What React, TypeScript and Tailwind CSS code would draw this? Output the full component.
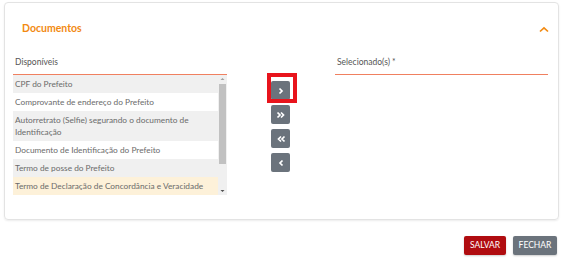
import React from 'react';

const disponiveis = [
  { label: 'CPF do Prefeito', bg: 'bg-[#f0f0f0]' },
  { label: 'Comprovante de endereço do Prefeito', bg: 'bg-white' },
  { label: 'Autorretrato (Selfie) segurando o documento de Identificação', bg: 'bg-[#f0f0f0]' },
  { label: 'Documento de Identificação do Prefeito', bg: 'bg-white' },
  { label: 'Termo de posse do Prefeito', bg: 'bg-[#f0f0f0]' },
  { label: 'Termo de Declaração de Concordância e Veracidade', bg: 'bg-[#fdf1d9]' },
];

const Chevron: React.FC<{ dir: 'right' | 'left'; double?: boolean }> = ({ dir, double }) => {
  const one = dir === 'right' ? 'M3.5 2.5 L6 5 L3.5 7.5' : 'M6.5 2.5 L4 5 L6.5 7.5';
  const two = dir === 'right' ? 'M1.5 2.5 L4 5 L1.5 7.5 M5 2.5 L7.5 5 L5 7.5' : 'M5 2.5 L2.5 5 L5 7.5 M8.5 2.5 L6 5 L8.5 7.5';
  return (
    <svg width="10" height="10" viewBox="0 0 10 10">
      <path d={double ? two : one} fill="none" stroke="white" strokeWidth="1.7" />
    </svg>
  );
};

const btn = 'w-[19px] h-[19px] rounded-[2px] bg-[#6b737c] flex items-center justify-center';

const App: React.FC = () => {
  return (
    <div className="w-[566px] h-[268px] bg-white pt-[2px] pl-[4px]" style={{ fontFamily: 'Lato, "Open Sans", sans-serif' }}>
      {/* Card */}
      <div className="w-[555px] h-[218px] rounded-[4px] border border-[#e3e3e3] shadow-[0_1px_2px_rgba(0,0,0,0.08)] pl-[8px] pr-[9px]">
        <div className="flex items-center justify-between h-[52px] pl-[9px]">
          <h2 className="text-[10.5px] font-bold text-[#f28a12] mt-[-1px]">Documentos</h2>
          <svg width="10" height="7" viewBox="0 0 10 7">
            <path d="M1 5.5 L5 1.8 L9 5.5" fill="none" stroke="#f28a12" strokeWidth="1.7" />
          </svg>
        </div>

        <div className="flex">
          {/* Disponíveis */}
          <div className="w-[214px]">
            <div className="h-[20px] flex items-end pb-[5px] pl-[2px] border-b border-[#f08060] text-[8.5px] text-[#555]">
              Disponíveis
            </div>
            <div className="flex text-[8.3px] text-[#6b6b6b] leading-[12px]">
              <div className="flex-1">
                {disponiveis.map((d) => (
                  <div key={d.label} className={`${d.bg} px-[2px] py-[3px] min-h-[18px] flex items-center`}>
                    {d.label}
                  </div>
                ))}
              </div>
              <div className="w-[9px] bg-[#f0f0f0] flex flex-col items-center">
                <svg width="5" height="9" viewBox="0 0 5 9">
                  <path d="M0.5 5 L2.5 3 L4.5 5 Z" fill="#a0a0a0" />
                </svg>
                <div className="w-[7px] h-[80px] bg-[#c1c1c1]" />
                <div className="flex-1" />
                <svg width="5" height="9" viewBox="0 0 5 9">
                  <path d="M0.5 4 L2.5 6 L4.5 4 Z" fill="#505050" />
                </svg>
              </div>
            </div>
          </div>

          {/* Buttons */}
          <div className="ml-[44px] pt-[26px] flex flex-col gap-[5px]">
            <div className="relative">
              <button className={btn}>
                <Chevron dir="right" />
              </button>
              <div className="absolute left-[-4px] top-[-8px] w-[30px] h-[30px] border-[4px] border-[#e8141c]" />
            </div>
            <button className={btn}>
              <Chevron dir="right" double />
            </button>
            <button className={btn}>
              <Chevron dir="left" double />
            </button>
            <button className={btn}>
              <Chevron dir="left" />
            </button>
          </div>

          {/* Selecionados */}
          <div className="ml-[45px] w-[213px]">
            <div className="h-[20px] flex items-end pb-[5px] pl-[2px] border-b border-[#f08060] text-[8.5px] text-[#555]">
              Selecionado(s) *
            </div>
          </div>
        </div>
      </div>

      {/* Footer actions */}
      <div className="flex justify-end gap-[7px] pr-[9px] mt-[16px]">
        <button className="h-[19px] w-[42px] rounded-[2px] bg-[#b00c10] text-white text-[8.5px] flex items-center justify-center shadow-[0_1px_2px_rgba(0,0,0,0.2)]">
          SALVAR
        </button>
        <button className="h-[19px] w-[44px] rounded-[2px] bg-[#6b737c] text-white text-[8.5px] flex items-center justify-center shadow-[0_1px_2px_rgba(0,0,0,0.2)]">
          FECHAR
        </button>
      </div>
    </div>
  );
};

export default App;
